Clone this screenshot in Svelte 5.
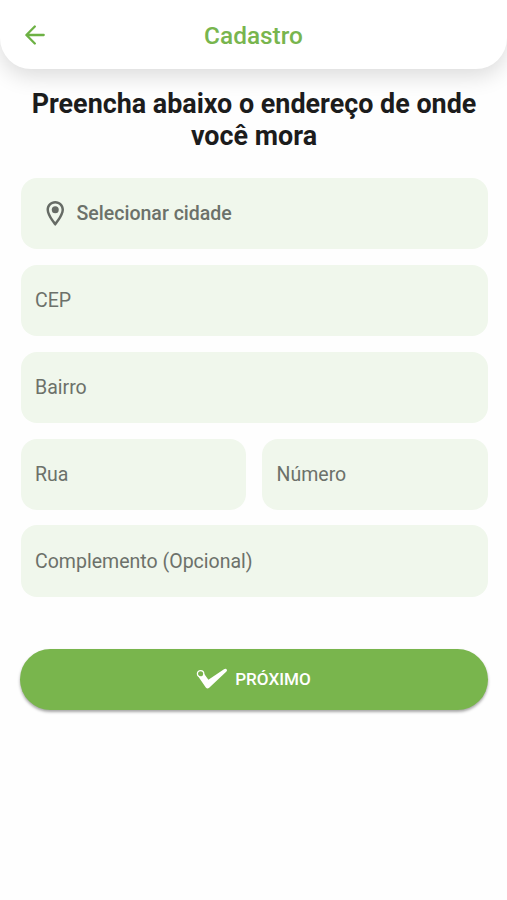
<script lang="ts">
	let address = $state({
		cep: '',
		district: '',
		street: '',
		number: '',
		complement: ''
	});

	function handleSubmit(event: SubmitEvent) {
		event.preventDefault();
	}
</script>

<div class="screen">
	<header>
		<button type="button" class="back" aria-label="Voltar">
			<svg viewBox="0 0 20 20" width="20" height="20">
				<path d="M18.7 10H1.6M9.8 1.5L1.4 10l8.4 8.5" />
			</svg>
		</button>
		<h1>Cadastro</h1>
	</header>

	<form onsubmit={handleSubmit}>
		<h2>Preencha abaixo o endereço de onde você mora</h2>

		<button type="button" class="field city">
			<svg viewBox="5 2 14 20" width="18.5" height="25">
				<path
					d="M12 2C8.13 2 5 5.13 5 9c0 5.25 7 13 7 13s7-7.75 7-13c0-3.87-3.13-7-7-7zM7 9c0-2.76 2.24-5 5-5s5 2.24 5 5c0 2.88-2.88 7.19-5 9.88C9.92 16.21 7 11.85 7 9z"
				/>
				<circle cx="12" cy="9" r="2.8" />
			</svg>
			<span>Selecionar cidade</span>
		</button>

		<input class="field" placeholder="CEP" bind:value={address.cep} />
		<input class="field" placeholder="Bairro" bind:value={address.district} />
		<div class="row">
			<input class="field" placeholder="Rua" bind:value={address.street} />
			<input class="field" placeholder="Número" bind:value={address.number} />
		</div>
		<input class="field" placeholder="Complemento (Opcional)" bind:value={address.complement} />

		<button type="submit" class="next">
			<svg viewBox="0 0 32 22" width="32" height="22">
				<path
					class="check"
					d="M1.4 7.2L7.4 4.8L12.4 11.8L28 1.2Q30.4 .2 31 2.2Q31 3 30.2 3.8L13.2 19.8Q11.4 21.2 9.8 19.6Z"
				/>
				<circle cx="4.6" cy="5.8" r="3.2" />
			</svg>
			<span>PRÓXIMO</span>
		</button>
	</form>
</div>

<style>
	:global(body) {
		background: #fefefe;
	}

	.screen {
		height: 900px;
		overflow: hidden;
		font-family: Roboto, sans-serif;
		background: #fefefe;
	}

	button {
		border: none;
		font-family: inherit;
		cursor: pointer;
	}

	header {
		display: grid;
		grid-template-columns: 70px 1fr 70px;
		align-items: center;
		height: 69px;
		box-sizing: border-box;
		padding-top: 3px;
		background: #fff;
		border-radius: 0 0 31px 31px;
		box-shadow: 0 7px 22px rgba(0, 0, 0, 0.14);
	}

	.back {
		display: flex;
		padding: 0 0 2px 25px;
		background: none;
	}

	.back path {
		fill: none;
		stroke: #6db144;
		stroke-width: 2.3;
		stroke-linecap: round;
		stroke-linejoin: round;
	}

	h1 {
		margin: 0;
		font-size: 24.4px;
		font-weight: 500;
		line-height: 28px;
		text-align: center;
		color: #78b54e;
	}

	form {
		display: flex;
		flex-direction: column;
		gap: 15.4px;
		padding: 19px 19.5px 0 20.5px;
	}

	h2 {
		margin: 0 0 10.5px;
		font-size: 26.9px;
		font-weight: 700;
		line-height: 32px;
		text-align: center;
		color: #1c1c1c;
	}

	.field {
		width: 100%;
		min-width: 0;
		height: 71.5px;
		box-sizing: border-box;
		padding: 0 14.5px;
		border: none;
		border-radius: 16px;
		outline: none;
		background: #f0f7ec;
		font-family: inherit;
		font-size: 19.55px;
		color: #1c1c1c;
	}

	.field::placeholder {
		color: #6c716a;
		opacity: 1;
	}

	.city {
		display: flex;
		align-items: center;
		gap: 12.5px;
		padding-left: 25px;
		font-weight: 500;
		color: #6c716a;
	}

	.city svg {
		fill: #666b65;
	}

	.row {
		display: flex;
		gap: 16px;
	}

	.next {
		display: flex;
		align-items: center;
		justify-content: center;
		gap: 7px;
		height: 61px;
		margin: 36.3px -0.5px 0;
		padding: 0 1px 1px 0;
		border-radius: 31px;
		background: #79b54d;
		box-shadow: 0 2px 3px rgba(0, 0, 0, 0.35);
		font-size: 17.1px;
		font-weight: 500;
		color: #fff;
	}

	.check {
		fill: #fff;
	}

	.next circle {
		fill: #79b54d;
		stroke: #fff;
		stroke-width: 1.3;
	}
</style>
